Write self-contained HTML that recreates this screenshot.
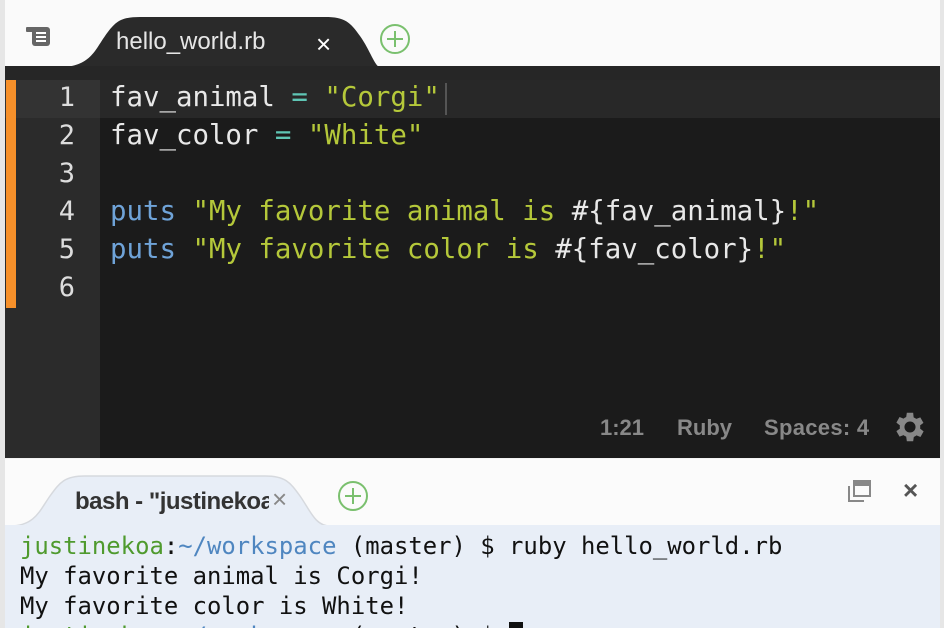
<!DOCTYPE html><html style="overflow:hidden"><head><style>
html,body{margin:0;width:944px;height:628px;overflow:hidden}
body{background:#f3f3f3;font-family:"Liberation Sans",sans-serif;position:relative}
.a{position:absolute}
.mono{font-family:"DejaVu Sans Mono","Liberation Mono",monospace}
.code div{height:38px;line-height:38px;white-space:pre}
.k{color:#6fa3d8}.s{color:#b5c83a}.o{color:#5fc6b5}
</style></head><body>
<div class="a" style="left:5px;top:0;width:935px;height:66px;background:#fafafa"></div>
<div class="a" style="left:0;top:0;width:5px;height:628px;background:#e6e6e6"></div>
<div class="a" style="left:940px;top:0;width:4px;height:628px;background:#e6e6e6"></div>
<svg class="a" style="left:26px;top:26px" width="30" height="22"><rect x="6" y="1" width="18" height="19" rx="3" fill="#666"/><rect x="0" y="1" width="10" height="5" rx="1" fill="#666"/><rect x="10" y="6" width="10" height="2" fill="#fff"/><rect x="10" y="10" width="10" height="2" fill="#fff"/><rect x="10" y="14" width="10" height="2" fill="#fff"/></svg>
<svg class="a" style="left:60px;top:14px" width="320" height="53"><path d="M0 53 C30 53 35 36 45 22 C55 8 60 3 80 3 L265 3 C285 3 290 8 300 22 C310 36 315 53 320 53 Z" fill="#2a2a2a"/></svg>
<div class="a" style="left:116px;top:28px;font-size:24px;color:#e6e6e6">hello_world.rb</div>
<div class="a" style="left:316px;top:29px;font-size:26px;color:#fff">×</div>
<svg class="a" style="left:379px;top:23px" width="32" height="32"><circle cx="16" cy="16" r="14" fill="none" stroke="#7ac06e" stroke-width="2"/><path d="M16 8v16M8 16h16" stroke="#7ac06e" stroke-width="2"/></svg>
<div class="a" style="left:5px;top:66px;width:935px;height:392px;background:#1b1b1b"></div>
<div class="a" style="left:5px;top:66px;width:95px;height:392px;background:#2b2b2b"></div>
<div class="a" style="left:5px;top:66px;width:935px;height:14px;background:#262626"></div>
<div class="a" style="left:5px;top:80px;width:95px;height:38px;background:#333"></div>
<div class="a" style="left:100px;top:80px;width:840px;height:38px;background:#282828"></div>
<div class="a" style="left:6px;top:80px;width:10px;height:228px;background:#f6902a"></div>
<div class="a mono code" style="left:40px;top:79px;width:35px;text-align:right;font-size:27px;color:#ddd"><div>1</div><div>2</div><div>3</div><div>4</div><div>5</div><div>6</div></div>
<div class="a mono code" style="left:110px;top:79px;font-size:27.4px;color:#e8e8e8"><div>fav_animal <span class="o">=</span> <span class="s">"Corgi"</span></div><div>fav_color <span class="o">=</span> <span class="s">"White"</span></div><div> </div><div><span class="k">puts</span> <span class="s">"My favorite animal is </span>#{fav_animal}<span class="s">!"</span></div><div><span class="k">puts</span> <span class="s">"My favorite color is </span>#{fav_color}<span class="s">!"</span></div></div>
<div class="a" style="left:445px;top:83px;width:2px;height:32px;background:#555"></div>
<div class="a" style="left:600px;top:415px;font-size:22px;font-weight:bold;color:#888">1:21</div>
<div class="a" style="left:677px;top:415px;font-size:22px;font-weight:bold;color:#888">Ruby</div>
<div class="a" style="left:764px;top:415px;font-size:22px;font-weight:bold;color:#888;letter-spacing:0.3px">Spaces: 4</div>
<svg class="a" style="left:891px;top:408px" width="38" height="38" viewBox="0 0 24 24"><path fill="#888" d="M19.4 13a7.5 7.5 0 0 0 0-2l2.1-1.6-2-3.5-2.5 1a7 7 0 0 0-1.7-1L15 3h-4l-.4 2.7a7 7 0 0 0-1.7 1l-2.5-1-2 3.5L6.6 11a7.5 7.5 0 0 0 0 2l-2.2 1.6 2 3.5 2.5-1a7 7 0 0 0 1.7 1L11 21h4l.4-2.7a7 7 0 0 0 1.7-1l2.5 1 2-3.5zM13 15.5a3.5 3.5 0 1 1 0-7 3.5 3.5 0 0 1 0 7z" transform="translate(-1 0)"/></svg>
<div class="a" style="left:5px;top:459px;width:935px;height:66px;background:#fbfbfb"></div>
<svg class="a" style="left:10px;top:474px" width="320" height="52"><path d="M0 52 C25 52 30 36 40 22 C50 8 55 2 75 2 L255 2 C275 2 280 8 290 22 C300 36 305 52 320 52 Z" fill="#e8eef7" stroke="#d6d9de" stroke-width="1.5"/></svg>
<div class="a" style="left:75px;top:488px;font-size:24px;font-weight:bold;color:#333;letter-spacing:-0.5px;width:194px;overflow:hidden;white-space:nowrap">bash - "justinekoa</div>
<div class="a" style="left:272px;top:484px;font-size:26px;color:#888">×</div>
<svg class="a" style="left:337px;top:480px" width="32" height="32"><circle cx="16" cy="16" r="14" fill="none" stroke="#7ac06e" stroke-width="2"/><path d="M16 8v16M8 16h16" stroke="#7ac06e" stroke-width="2"/></svg>
<svg class="a" style="left:847px;top:478px" width="26" height="26"><path d="M2 8v15h15" fill="none" stroke="#888" stroke-width="2"/><rect x="7" y="3" width="16" height="15" fill="none" stroke="#888" stroke-width="2"/><rect x="7" y="3" width="16" height="5" fill="#888"/></svg>
<div class="a" style="left:903px;top:475px;font-size:26px;font-weight:bold;color:#555">×</div>
<div class="a" style="left:5px;top:525px;width:935px;height:103px;background:#e8eef7;overflow:hidden">
<div class="a mono" style="left:15px;top:6px;font-size:23.9px;line-height:30px;color:#111;white-space:pre"><div><span style="color:#4f9a2e">justinekoa</span>:<span style="color:#4f86c0">~/workspace</span> (master) $ ruby hello_world.rb</div><div>My favorite animal is Corgi!</div><div>My favorite color is White!</div><div><span style="color:#4f9a2e">justinekoa</span>:<span style="color:#4f86c0">~/workspace</span> (master) $ <span style="background:#111"> </span></div></div>
</div>
</body></html>
